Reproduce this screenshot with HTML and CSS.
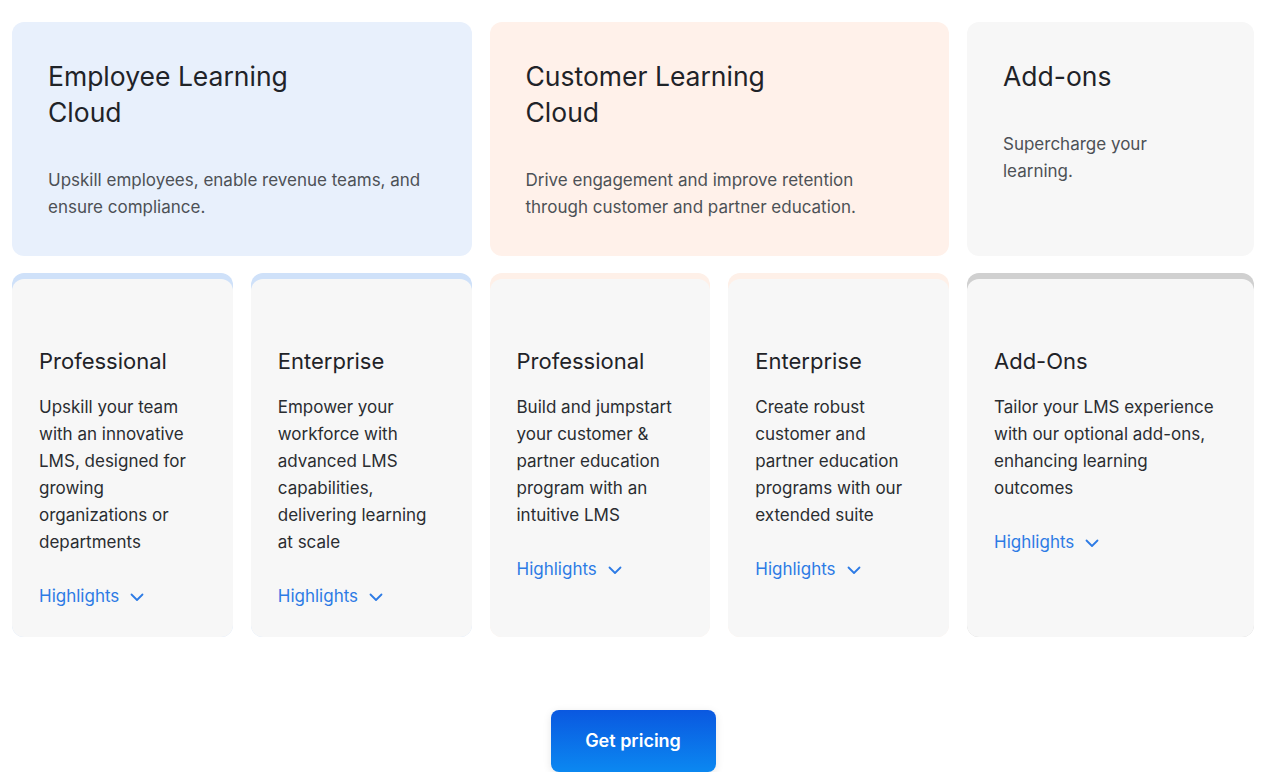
FILE: index.html
```html
<!DOCTYPE html>
<html lang="en">
<head>
    <meta charset="UTF-8">
    <title>Plans</title>
    <link rel="stylesheet" href="styles.css">
</head>
<body>
    <div class="wrap">
        <div class="plans">
            <div class="cloud cloud-blue">
                <h2>Employee Learning Cloud</h2>
                <p>Upskill employees, enable revenue teams, and ensure compliance.</p>
            </div>
            <div class="cloud cloud-orange">
                <h2>Customer Learning Cloud</h2>
                <p>Drive engagement and improve retention through customer and partner education.</p>
            </div>
            <div class="cloud cloud-gray">
                <h2>Add-ons</h2>
                <p>Supercharge your learning.</p>
            </div>

            <div class="plan plan-blue">
                <div class="plan-inner">
                    <h3>Professional</h3>
                    <p>Upskill your team with an innovative LMS, designed for growing organizations or departments</p>
                    <a class="more" href="#">Highlights <svg width="16" height="16" viewBox="0 0 16 16"><path d="M2.5 5.5l5.5 5.5 5.5-5.5" fill="none" stroke="currentColor" stroke-width="1.8" stroke-linecap="round" stroke-linejoin="round"/></svg></a>
                </div>
            </div>
            <div class="plan plan-blue">
                <div class="plan-inner">
                    <h3>Enterprise</h3>
                    <p>Empower your workforce with advanced LMS capabilities, delivering learning at scale</p>
                    <a class="more" href="#">Highlights <svg width="16" height="16" viewBox="0 0 16 16"><path d="M2.5 5.5l5.5 5.5 5.5-5.5" fill="none" stroke="currentColor" stroke-width="1.8" stroke-linecap="round" stroke-linejoin="round"/></svg></a>
                </div>
            </div>
            <div class="plan plan-orange">
                <div class="plan-inner">
                    <h3>Professional</h3>
                    <p>Build and jumpstart your customer &amp; partner education program with an intuitive LMS</p>
                    <a class="more" href="#">Highlights <svg width="16" height="16" viewBox="0 0 16 16"><path d="M2.5 5.5l5.5 5.5 5.5-5.5" fill="none" stroke="currentColor" stroke-width="1.8" stroke-linecap="round" stroke-linejoin="round"/></svg></a>
                </div>
            </div>
            <div class="plan plan-orange">
                <div class="plan-inner">
                    <h3>Enterprise</h3>
                    <p>Create robust customer and partner education programs with our extended suite</p>
                    <a class="more" href="#">Highlights <svg width="16" height="16" viewBox="0 0 16 16"><path d="M2.5 5.5l5.5 5.5 5.5-5.5" fill="none" stroke="currentColor" stroke-width="1.8" stroke-linecap="round" stroke-linejoin="round"/></svg></a>
                </div>
            </div>
            <div class="plan plan-gray">
                <div class="plan-inner">
                    <h3>Add-Ons</h3>
                    <p>Tailor your LMS experience with our optional add-ons, enhancing learning outcomes</p>
                    <a class="more" href="#">Highlights <svg width="16" height="16" viewBox="0 0 16 16"><path d="M2.5 5.5l5.5 5.5 5.5-5.5" fill="none" stroke="currentColor" stroke-width="1.8" stroke-linecap="round" stroke-linejoin="round"/></svg></a>
                </div>
            </div>
        </div>
        <div class="cta">
            <a class="btn" href="#">Get pricing</a>
        </div>
    </div>
</body>
</html>
```

FILE: styles.css
```css
* { margin: 0; padding: 0; box-sizing: border-box; }
body {
    font-family: Inter, "Noto Sans", sans-serif;
    background: #fff;
    color: #1f2328;
}
.wrap {
    width: 1242px;
    margin: 22px 0 0 12px;
}
.plans {
    display: grid;
    grid-template-columns: repeat(4, 1fr) 287px;
    gap: 17px 18px;
}
.cloud {
    grid-column: span 2;
    border-radius: 12px;
    padding: 36px 36px 30px;
    height: 234px;
}
.cloud-gray { grid-column: span 1; background: #f7f7f7; }
.cloud-blue { background: #e8f0fc; }
.cloud-orange { background: #fff1ea; }
.cloud h2 {
    font-size: 26.5px;
    font-weight: 400;
    line-height: 36px;
    max-width: 270px;
    color: #1f2328;
}
.cloud p {
    margin-top: 37px;
    font-size: 17px;
    line-height: 27px;
    color: #4d5156;
    max-width: 385px;
}
.cloud-gray p { max-width: 150px; }

.plan {
    border-radius: 12px;
    padding-top: 6px;
}
.plan-blue { background: #cfe1f9; }
.plan-orange { background: #fef0e8; }
.plan-gray { background: #d0d0d0; }
.plan-inner {
    background: #f7f7f7;
    border-radius: 12px;
    height: 100%;
    padding: 67px 27px 27px;
}
.plan h3 {
    font-size: 22px;
    font-weight: 400;
    line-height: 30px;
    color: #1f2328;
}
.plan p {
    margin-top: 18px;
    font-size: 17px;
    line-height: 27px;
    color: #2a2d31;
}
.more {
    display: inline-flex;
    align-items: center;
    gap: 10px;
    margin-top: 27px;
    font-size: 17px;
    line-height: 27px;
    color: #2d7be5;
    text-decoration: none;
}
.more svg { display: block; }

.cta {
    display: flex;
    justify-content: center;
    margin-top: 73px;
}
.btn {
    display: block;
    width: 165px;
    height: 62px;
    line-height: 62px;
    text-align: center;
    border-radius: 8px;
    background: linear-gradient(180deg, #0a58e0, #0b88f1);
    box-shadow: 0 2px 8px rgba(0, 0, 0, 0.1);
    color: #fff;
    font-size: 18px;
    font-weight: 600;
    text-decoration: none;
}
```
